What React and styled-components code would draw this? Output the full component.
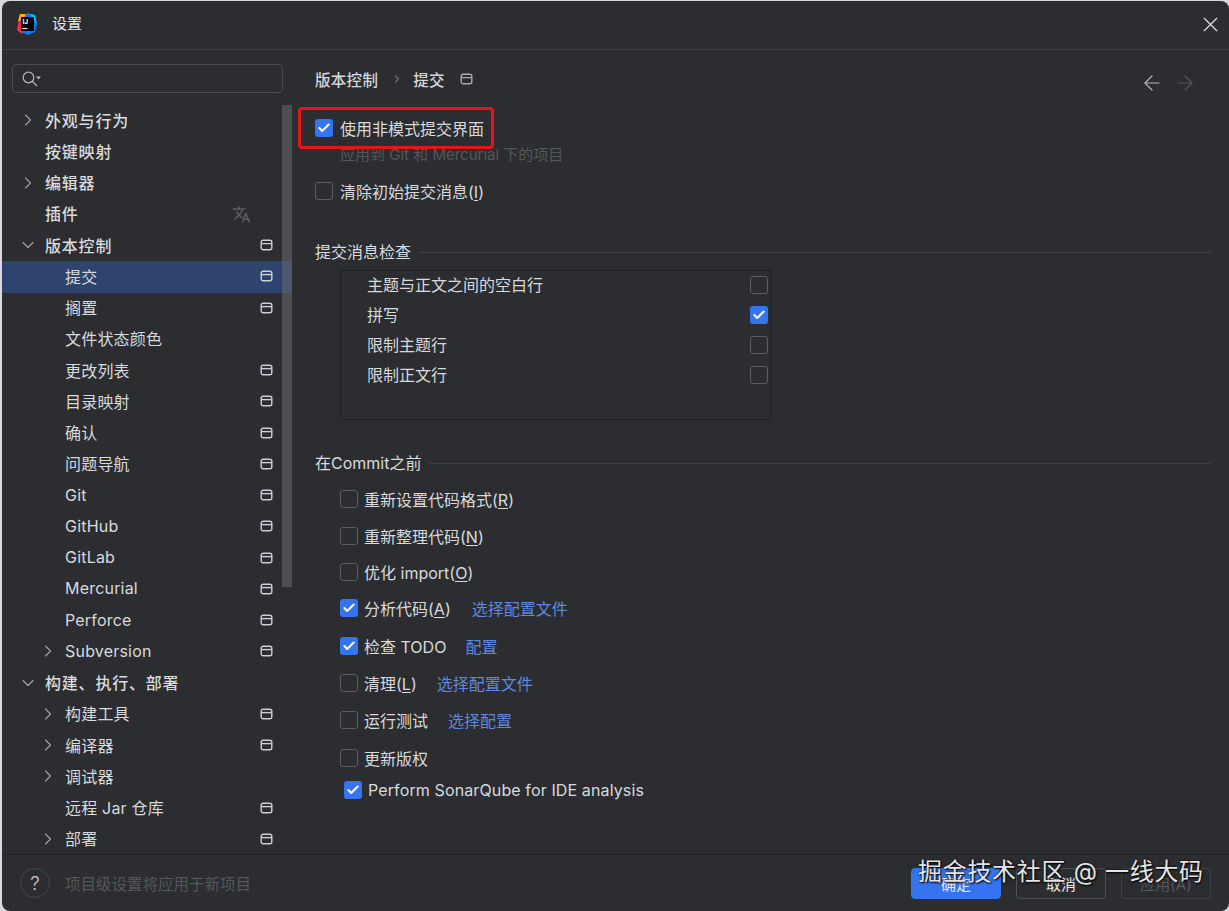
import React from "react";
import styled, { createGlobalStyle } from "styled-components";
import { ChevronRight, ChevronDown, ArrowLeft, ArrowRight, X, Check } from "lucide-react";
import { MdTranslate } from "react-icons/md";

const GlobalStyle = createGlobalStyle`
  html, body { margin: 0; padding: 0; background: #d9d9d9; }
  * { box-sizing: border-box; }
  body { font-family: Inter, "Noto Sans CJK SC", sans-serif; font-size: 16px; color: #d8dade; }
`;

const Page = styled.div`
  width: 1229px;
  height: 911px;
  padding: 1px 0 0 2px;
  overflow: hidden;
`;
const Win = styled.div`
  position: relative;
  width: 1227px;
  height: 910px;
  background: #2b2d30;
  border-radius: 8px;
  display: flex;
  flex-direction: column;
  overflow: hidden;
`;
const TitleBar = styled.div`
  height: 49px;
  flex: none;
  display: flex;
  align-items: center;
  padding: 0 6px 2px 14px;
  border-bottom: 1px solid #3c3e42;
`;
const WinTitle = styled.span`
  margin: 0 0 3px 14px;
  font-size: 15px;
  flex: 1;
  color: #e2e4e8;
`;
const Body = styled.div`
  flex: 1;
  min-height: 0;
  display: flex;
`;
const Sidebar = styled.aside`
  position: relative;
  width: 290px;
  flex: none;
  display: flex;
  flex-direction: column;
`;
const SearchBox = styled.div`
  margin: 14px 0 0 10px;
  width: 271px;
  height: 29px;
  flex: none;
  border: 1px solid #4a4c50;
  border-radius: 4px;
  display: flex;
  align-items: center;
  padding-left: 8px;
`;
const Tree = styled.div`
  margin-top: 12px;
`;
const TreeRow = styled.div`
  height: 31.25px;
  display: flex;
  align-items: center;
  position: relative;
  padding-left: ${(p) => 43 + p.$level * 20}px;
  padding-bottom: 2px;
  background: ${(p) => (p.$selected ? "#2e436e" : "transparent")};
  letter-spacing: ${(p) => (p.$level === 0 ? "0.8px" : "0.2px")};
  font-weight: ${(p) => (p.$level === 0 ? 500 : 400)};
`;
const Arrow = styled.span`
  position: absolute;
  left: ${(p) => 16 + p.$level * 20}px;
  top: 5px;
  display: flex;
  color: #a0a3a8;
`;
const ScopeSlot = styled.span`
  position: absolute;
  left: 258px;
  top: 9px;
  display: flex;
  z-index: 2;
`;
const TranslateSlot = styled.span`
  position: absolute;
  left: 230px;
  top: 6px;
  display: flex;
  color: #5c5f65;
`;
const ScrollThumb = styled.div`
  position: absolute;
  left: 280px;
  top: 55px;
  width: 10px;
  height: 482px;
  background: rgba(105, 107, 112, 0.55);
`;
const Main = styled.main`
  flex: 1;
  min-width: 0;
  padding: 0 18px 0 23px;
  display: flex;
  flex-direction: column;
`;
const Crumbs = styled.div`
  height: 59px;
  flex: none;
  display: flex;
  align-items: center;
  padding-bottom: 2px;
  font-weight: 500;
  font-size: 15.5px;
  letter-spacing: 0.3px;
  color: #d4d6da;
`;
const CrumbSep = styled.span`
  margin: 0 ${(p) => p.$after}px 0 ${(p) => p.$before}px;
  display: flex;
  color: #a8abb0;
`;
const NavArrows = styled.div`
  margin: 8px 14px 0 auto;
  display: flex;
  gap: 9px;
`;
const CheckRow = styled.label`
  height: ${(p) => p.$h || 37}px;
  display: flex;
  align-items: center;
  gap: ${(p) => p.$gap || 6}px;
  padding-left: ${(p) => p.$indent || 0}px;
  letter-spacing: ${(p) => p.$spread || 0}px;
  flex: none;
`;
const Box = styled.span`
  width: 18px;
  height: 18px;
  flex: none;
  border-radius: 3px;
  display: flex;
  align-items: center;
  justify-content: center;
  background: ${(p) => (p.$on ? "#3574f0" : "transparent")};
  border: ${(p) => (p.$on ? "none" : "1.5px solid #5a5d62")};
`;
const Hint = styled.div`
  height: 16px;
  margin: -2px 0 0 25px;
  display: flex;
  align-items: center;
  color: #54575c;
  font-size: 15px;
  flex: none;
`;
const U = styled.span`
  text-decoration: underline;
  text-underline-offset: 2px;
`;
const SectionHead = styled.div`
  display: flex;
  align-items: center;
  gap: 8px;
  height: 24px;
  flex: none;
  margin-top: ${(p) => p.$top}px;
  color: #d9dbdf;
  &::after {
    content: "";
    flex: 1;
    height: 1px;
    margin-top: 2px;
    background: #3e4044;
  }
`;
const CheckList = styled.div`
  margin: 7px 0 0 25px;
  width: 431px;
  height: 150px;
  flex: none;
  border: 1px solid #1f2023;
  padding: 0 2px 0 26px;
`;
const ListRow = styled.div`
  height: 30px;
  display: flex;
  align-items: center;
  justify-content: space-between;
  &:first-child { margin-top: -1px; }
`;
const ListLabel = styled.span`
  margin-bottom: 2px;
`;
const CommitList = styled.div`
  margin: 6px 0 0 25px;
  display: flex;
  flex-direction: column;
`;
const Link = styled.a`
  color: #6188dc;
  margin-left: ${(p) => p.$gap || 14}px;
`;
const Footer = styled.footer`
  height: 57px;
  flex: none;
  border-top: 1px solid #1f2023;
  display: flex;
  align-items: center;
  padding: 0 18px 0 18px;
`;
const HelpBtn = styled.span`
  width: 30px;
  height: 30px;
  border-radius: 50%;
  border: 1px solid #46484c;
  display: flex;
  align-items: center;
  justify-content: center;
  color: #c9ccd0;
  font-size: 19px;
  font-weight: 300;
`;
const FootNote = styled.span`
  margin-left: 15px;
  flex: 1;
  color: #55585d;
  font-size: 15.5px;
`;
const Btn = styled.button`
  width: 90px;
  height: 31px;
  margin-left: 15px;
  border-radius: 4px;
  font: inherit;
  font-size: 15px;
  background: ${(p) => (p.$primary ? "#3574f0" : "transparent")};
  border: 1px solid ${(p) => (p.$primary ? "#3574f0" : p.$off ? "#3e4044" : "#4e5055")};
  color: ${(p) => (p.$off ? "#55585d" : "#e6e8ec")};
`;
const RedFrame = styled.div`
  position: absolute;
  left: 296px;
  top: 106px;
  width: 196px;
  height: 42px;
  border: 3px solid #e8141c;
  border-radius: 4px;
  pointer-events: none;
`;
const Watermark = styled.div`
  position: absolute;
  left: 916px;
  top: 854px;
  font-size: 24px;
  letter-spacing: 0.7px;
  line-height: 34px;
  color: #e4e4e4;
  text-shadow: 1px 1px 2px #000, 0 0 2px #000;
  white-space: nowrap;
`;

const ScopeIcon = ({ dim }) => (
  <svg width="13" height="12" viewBox="0 0 13 12" fill="none" stroke={dim ? "#a9abb0" : "#ced0d6"} strokeWidth="1.4">
    <rect x="1.2" y="1.2" width="10.6" height="9.6" rx="2" />
    <path d="M1.2 4.6h10.6" />
  </svg>
);

const Logo = () => (
  <svg width="22" height="24" viewBox="0 0 22 24">
    <path d="M4 2l7 0 1 8-6 12-5-4z" fill="#fe2857" />
    <path d="M4 2l6 0-3 6-5 1z" fill="#ffb000" />
    <path d="M11 1l8 2 2 9-2 8-7 3-7-3z" fill="#087cfa" />
    <path d="M14 2l5 1 2 9z" fill="#07c3f2" />
    <rect x="5" y="5" width="13" height="14" fill="#000" />
    <text x="6.4" y="12.400" fontSize="6.5" fontWeight="700" fill="#fff" fontFamily="Inter, sans-serif">IJ</text>
    <rect x="6.4" y="16" width="5" height="1.1" fill="#fff" />
  </svg>
);

const SearchIcon = () => (
  <svg width="22" height="18" viewBox="0 0 22 18" fill="none" stroke="#b4b7bc" strokeWidth="1.2">
    <circle cx="7.5" cy="7.5" r="5.3" />
    <path d="M11.5 11.500l4.500 4.500" />
    <path d="M15 6.500h5l-2.500 3z" fill="#b4b7bc" stroke="none" />
  </svg>
);

const Check3 = ({ on }) => (
  <Box $on={on}>{on && <Check size={14} strokeWidth={3.6} color="#fff" />}</Box>
);

const treeItems = [
  { label: "外观与行为", level: 0, arrow: "right" },
  { label: "按键映射", level: 0 },
  { label: "编辑器", level: 0, arrow: "right" },
  { label: "插件", level: 0, translate: true },
  { label: "版本控制", level: 0, arrow: "down", scope: true },
  { label: "提交", level: 1, scope: true, selected: true },
  { label: "搁置", level: 1, scope: true },
  { label: "文件状态颜色", level: 1 },
  { label: "更改列表", level: 1, scope: true },
  { label: "目录映射", level: 1, scope: true },
  { label: "确认", level: 1, scope: true },
  { label: "问题导航", level: 1, scope: true },
  { label: "Git", level: 1, scope: true },
  { label: "GitHub", level: 1, scope: true },
  { label: "GitLab", level: 1, scope: true },
  { label: "Mercurial", level: 1, scope: true },
  { label: "Perforce", level: 1, scope: true },
  { label: "Subversion", level: 1, arrow: "right", scope: true },
  { label: "构建、执行、部署", level: 0, arrow: "down" },
  { label: "构建工具", level: 1, arrow: "right", scope: true },
  { label: "编译器", level: 1, arrow: "right", scope: true },
  { label: "调试器", level: 1, arrow: "right" },
  { label: "远程 Jar 仓库", level: 1, scope: true },
  { label: "部署", level: 1, arrow: "right", scope: true },
];

const checks = [
  { label: "主题与正文之间的空白行" },
  { label: "拼写", on: true },
  { label: "限制主题行" },
  { label: "限制正文行" },
];

export default function App() {
  return (
    <Page>
      <GlobalStyle />
      <Win>
        <TitleBar>
          <Logo />
          <WinTitle>设置</WinTitle>
          <X size={25} strokeWidth={1.1} color="#e6e8ec" />
        </TitleBar>
        <Body>
          <Sidebar>
            <SearchBox>
              <SearchIcon />
            </SearchBox>
            <Tree>
              {treeItems.map((item) => (
                <TreeRow key={item.label} $level={item.level} $selected={item.selected}>
                  {item.arrow && (
                    <Arrow $level={item.level}>
                      {item.arrow === "right" ? <ChevronRight size={20} strokeWidth={1.3} /> : <ChevronDown size={20} strokeWidth={1.3} />}
                    </Arrow>
                  )}
                  {item.label}
                  {item.scope && (
                    <ScopeSlot>
                      <ScopeIcon />
                    </ScopeSlot>
                  )}
                  {item.translate && (
                    <TranslateSlot>
                      <MdTranslate size={19} />
                    </TranslateSlot>
                  )}
                </TreeRow>
              ))}
            </Tree>
            <ScrollThumb />
          </Sidebar>
          <Main>
            <Crumbs>
              版本控制
              <CrumbSep $before={13} $after={10}>
                <ChevronRight size={12} strokeWidth={2} />
              </CrumbSep>
              提交
              <CrumbSep $before={15} $after={0}>
                <ScopeIcon dim />
              </CrumbSep>
              <NavArrows>
                <ArrowLeft size={24} strokeWidth={1.2} color="#b4b7bc" />
                <ArrowRight size={24} strokeWidth={1.2} color="#55585d" />
              </NavArrows>
            </Crumbs>
            <CheckRow $h={38} $gap={7}>
              <Check3 on />
              使用非模式提交界面
            </CheckRow>
            <Hint>应用到 Git 和 Mercurial 下的项目</Hint>
            <CheckRow $h={60} $gap={7}>
              <Check3 />
              <span>
                清除初始提交消息(<U>I</U>)
              </span>
            </CheckRow>
            <SectionHead $top={18}>提交消息检查</SectionHead>
            <CheckList>
              {checks.map((c) => (
                <ListRow key={c.label}>
                  <ListLabel>{c.label}</ListLabel>
                  <Check3 on={c.on} />
                </ListRow>
              ))}
            </CheckList>
            <SectionHead $top={30}>在Commit之前</SectionHead>
            <CommitList>
              <CheckRow>
                <Check3 />
                <span>
                  重新设置代码格式(<U>R</U>)
                </span>
              </CheckRow>
              <CheckRow>
                <Check3 />
                <span>
                  重新整理代码(<U>N</U>)
                </span>
              </CheckRow>
              <CheckRow $h={35}>
                <Check3 />
                <span>
                  优化 import(<U>O</U>)
                </span>
              </CheckRow>
              <CheckRow $h={37}>
                <Check3 on />
                <span>
                  分析代码(<U>A</U>)
                </span>
                <Link $gap={15}>选择配置文件</Link>
              </CheckRow>
              <CheckRow $h={39}>
                <Check3 on />
                检查 TODO
                <Link $gap={13}>配置</Link>
              </CheckRow>
              <CheckRow $h={35}>
                <Check3 />
                <span>
                  清理(<U>L</U>)
                </span>
                <Link>选择配置文件</Link>
              </CheckRow>
              <CheckRow $h={39}>
                <Check3 />
                运行测试
                <Link>选择配置</Link>
              </CheckRow>
              <CheckRow $h={37}>
                <Check3 />
                更新版权
              </CheckRow>
              <CheckRow $h={27} $indent={4} $spread={0.12}>
                <Check3 on />
                Perform SonarQube for IDE analysis
              </CheckRow>
            </CommitList>
          </Main>
        </Body>
        <Footer>
          <HelpBtn>?</HelpBtn>
          <FootNote>项目级设置将应用于新项目</FootNote>
          <Btn $primary>确定</Btn>
          <Btn>取消</Btn>
          <Btn $off>应用(A)</Btn>
        </Footer>
        <RedFrame />
        <Watermark>掘金技术社区 @ 一线大码</Watermark>
      </Win>
    </Page>
  );
}
